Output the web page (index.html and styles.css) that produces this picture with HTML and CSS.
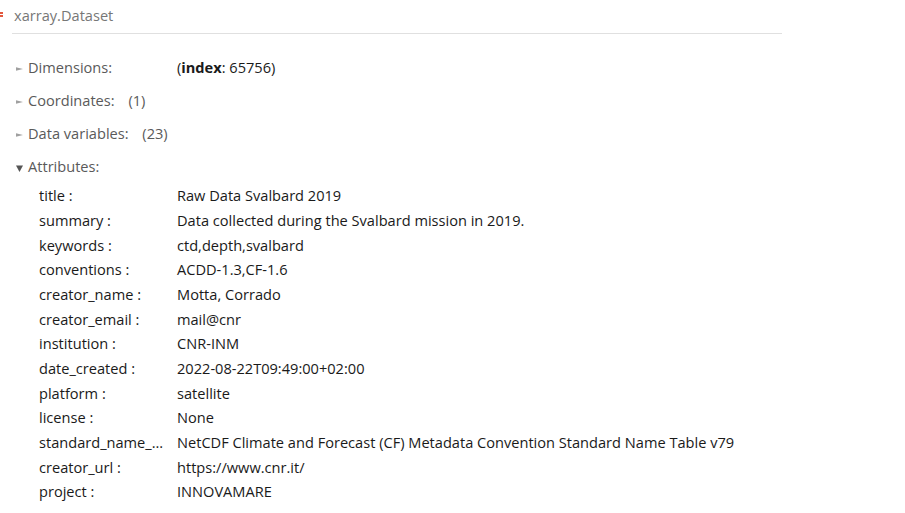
FILE: index.html
```html
<!DOCTYPE html>
<html>
<head>
<meta charset="utf-8">
<link rel="stylesheet" href="styles.css">
</head>
<body>
<div class="page">
  <div class="marker"><span></span><span></span></div>
  <div class="repr">
    <div class="header">xarray.Dataset</div>
    <ul class="sections">
      <li class="section">
        <div class="sec-label"><svg class="arrow" width="7" height="6" viewBox="0 0 7 6"><path d="M0 1.2 L7 3 L0 4.8 Z"/></svg>Dimensions:</div>
        <div class="sec-value">(<b>index</b>: 65756)</div>
      </li>
      <li class="section">
        <div class="sec-label"><svg class="arrow" width="7" height="6" viewBox="0 0 7 6"><path d="M0 1.2 L7 3 L0 4.8 Z"/></svg>Coordinates: <span class="count">(1)</span></div>
      </li>
      <li class="section">
        <div class="sec-label"><svg class="arrow" width="7" height="6" viewBox="0 0 7 6"><path d="M0 1.2 L7 3 L0 4.8 Z"/></svg>Data variables: <span class="count">(23)</span></div>
      </li>
      <li class="section open">
        <div class="sec-label"><svg class="arrow down" width="7" height="7" viewBox="0 0 7 7"><path d="M0 0.5 L7 0.5 L3.5 7 Z"/></svg>Attributes:</div>
      </li>
    </ul>
    <dl class="attrs">
      <dt>title :</dt><dd>Raw Data Svalbard 2019</dd>
      <dt>summary :</dt><dd>Data collected during the Svalbard mission in 2019.</dd>
      <dt>keywords :</dt><dd>ctd,depth,svalbard</dd>
      <dt>conventions :</dt><dd>ACDD-1.3,CF-1.6</dd>
      <dt>creator_name :</dt><dd>Motta, Corrado</dd>
      <dt>creator_email :</dt><dd>mail@cnr</dd>
      <dt>institution :</dt><dd>CNR-INM</dd>
      <dt>date_created :</dt><dd>2022-08-22T09:49:00+02:00</dd>
      <dt>platform :</dt><dd>satellite</dd>
      <dt>license :</dt><dd>None</dd>
      <dt>standard_name_...</dt><dd>NetCDF Climate and Forecast (CF) Metadata Convention Standard Name Table v79</dd>
      <dt>creator_url :</dt><dd>https://www.cnr.it/</dd>
      <dt>project :</dt><dd>INNOVAMARE</dd>
    </dl>
  </div>
</div>
</body>
</html>
```
FILE: styles.css
```css
html, body {
  margin: 0;
  padding: 0;
  background: #ffffff;
}
body {
  font-family: "Open Sans", "Noto Sans", sans-serif;
  font-size: 14.6px;
  color: #1a1a1a;
}
.page {
  position: relative;
  padding-left: 12px;
}
.marker {
  position: absolute;
  left: 0;
  top: 12px;
  display: flex;
  flex-direction: column;
  gap: 1px;
}
.marker span {
  display: block;
  width: 3px;
  height: 2px;
  background: #e2583e;
}
.repr {
  width: 770px;
}
.header {
  height: 33px;
  line-height: 30px;
  padding-left: 2px;
  color: #777;
  border-bottom: 1px solid #e0e0e0;
}
.sections {
  list-style: none;
  margin: 0;
  padding: 23px 0 0 0;
}
.section {
  display: grid;
  grid-template-columns: 165px 1fr;
  height: 33.1px;
  line-height: 20px;
}
.sec-label {
  color: #5a5a5a;
  padding-left: 4px;
}
.arrow {
  display: inline-block;
  margin-right: 5px;
  vertical-align: 1px;
  fill: #a0a0a0;
}
.arrow.down {
  fill: #555;
  vertical-align: 0;
}
.count {
  margin-left: 10px;
}
.sec-value {
  color: #1a1a1a;
}
.sec-value b {
  font-weight: 700;
}
.attrs {
  margin: -6px 0 0 0;
  padding-left: 27px;
  display: grid;
  grid-template-columns: 138px 1fr;
  grid-auto-rows: 24.67px;
  line-height: 24.67px;
}
.attrs dt, .attrs dd {
  margin: 0;
  color: #1a1a1a;
  white-space: nowrap;
}
```
